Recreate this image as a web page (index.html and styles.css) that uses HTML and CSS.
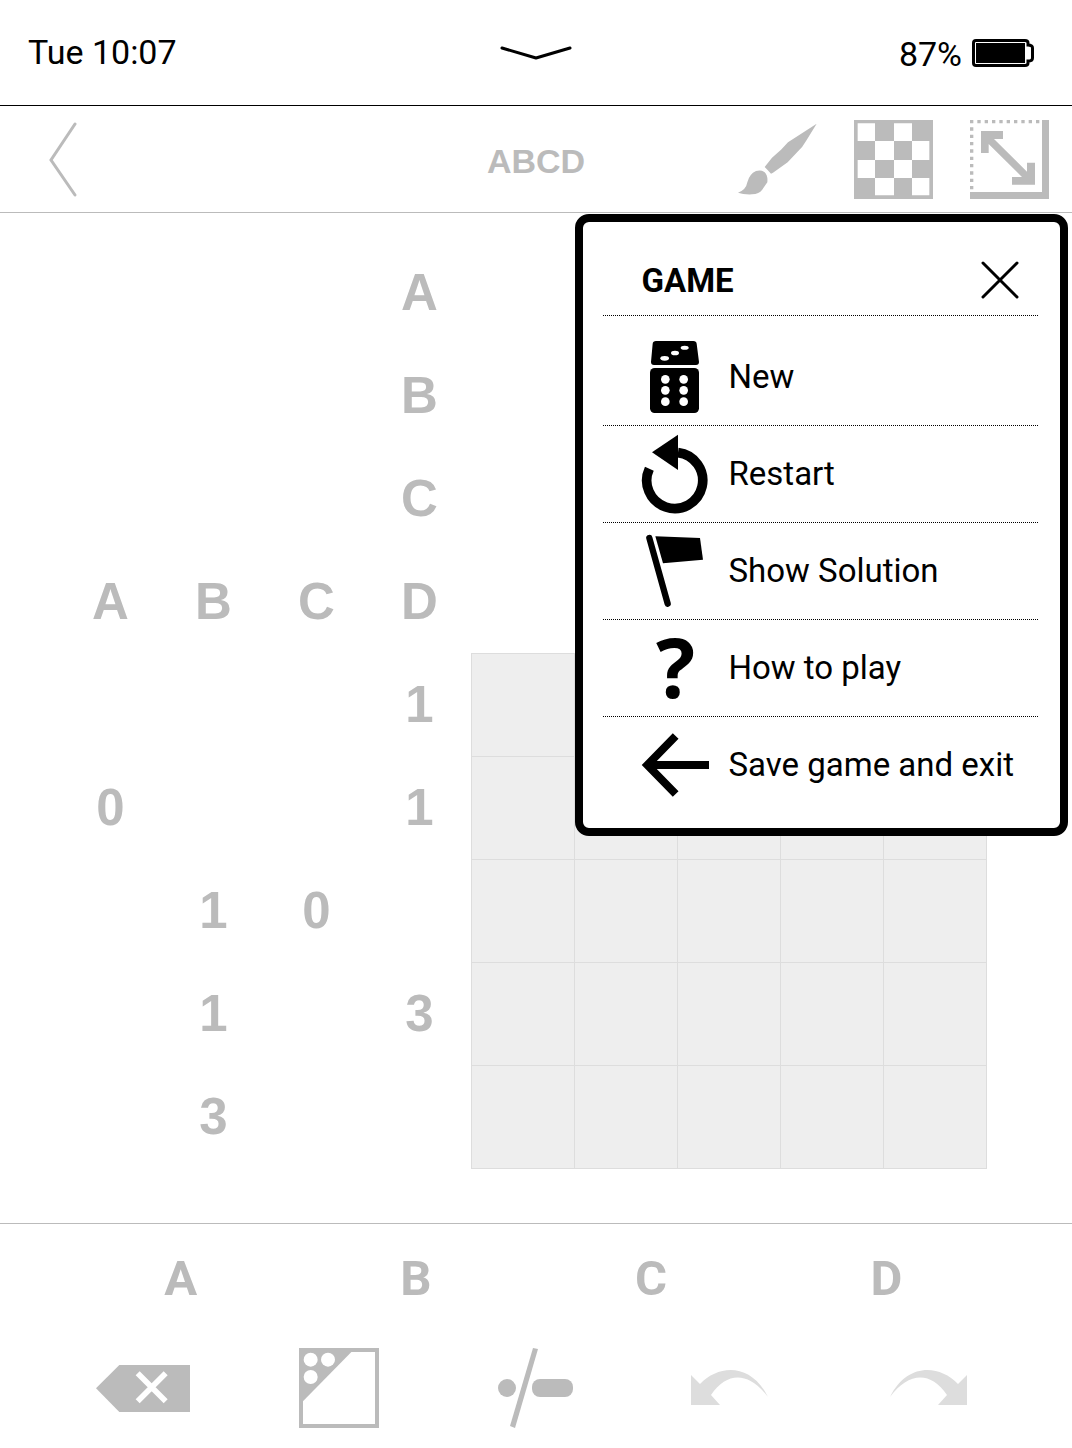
FILE: index.html
```html
<!DOCTYPE html>
<html lang="en">
<head>
<meta charset="utf-8">
<meta name="viewport" content="width=device-width, initial-scale=1">
<title>ABCD</title>
<link rel="stylesheet" href="styles.css">
</head>
<body>
<div class="app">
  <header class="status">
    <time class="clock">Tue 10:07</time>
    <button class="icon-button" aria-label="Open panel">
      <svg width="74" height="18" viewBox="0 0 74 18"><path d="M3 4 37 14 71 4" fill="none" stroke="#000" stroke-width="3" stroke-linecap="round" stroke-linejoin="round"/></svg>
    </button>
    <div class="power">
      <span>87%</span>
      <svg width="62" height="28" viewBox="0 0 62 28"><path d="M4 1.500H53Q56 1.500 56 4V6Q60.500 6 60.500 9V19Q60.500 22 56 22V24Q56 26.500 53 26.500H4Q1.500 26.500 1.500 24V4Q1.500 1.500 4 1.500Z" fill="none" stroke="#000" stroke-width="3"/><path d="M4 4H53V24H4Z"/></svg>
    </div>
  </header>

  <nav class="toolbar">
    <button class="icon-button back" aria-label="Back">
      <svg width="30" height="76" viewBox="0 0 30 76"><path d="M27 2 3 38 27 73" fill="none" stroke="currentColor" stroke-width="3" stroke-linecap="round"/></svg>
    </button>
    <h1 class="title">ABCD</h1>
    <div class="tools">
      <button class="icon-button" aria-label="Brush">
        <svg width="80" height="80" viewBox="0 0 240 240" fill="currentColor"><path d="M236 11 206 60Q194 82 178 96L149 127 105 158 99 161Q90 151 80 141L102 113 129 89 150 67ZM0 218Q24 210 28 187 34 162 54 153 70 148 80 157 90 166 88 187L72 210Q64 222 42 223 16 224 0 218Z"/></svg>
      </button>
      <button class="icon-button" aria-label="Pattern">
        <svg width="80" height="80" viewBox="0 0 240 240"><path d="M0 0H237V237H0Z" fill="currentColor"/><path d="M11 10H63V63H11ZM120 10H174V63H120ZM63 63H120V120H63ZM174 63H226V120H174ZM11 120H63V174H11ZM120 120H174V174H120ZM63 174H120V226H63ZM174 174H226V226H174Z" fill="#fff"/></svg>
      </button>
      <button class="icon-button" aria-label="Resize">
        <svg width="80" height="80" viewBox="0 0 240 240" fill="currentColor"><path d="M216 0H237V237H0V216H216ZM33 33H99V57H72L171 155V128H195V194H126V171H156L56 72V99H33Z"/><path d="M0 5H213M5 0V213" fill="none" stroke="currentColor" stroke-width="10" stroke-dasharray="10 12"/></svg>
      </button>
    </div>
  </nav>

  <main class="play">
    <div class="board">
      <div class="clues">
        <b class="clue c4 r1">A</b>
        <b class="clue c4 r2">B</b>
        <b class="clue c4 r3">C</b>
        <b class="clue c1 r4">A</b><b class="clue c2 r4">B</b><b class="clue c3 r4">C</b><b class="clue c4 r4">D</b>
        <b class="clue c4 r5">1</b>
        <b class="clue c1 r6">0</b><b class="clue c4 r6">1</b>
        <b class="clue c2 r7">1</b><b class="clue c3 r7">0</b>
        <b class="clue c2 r8">1</b><b class="clue c4 r8">3</b>
        <b class="clue c2 r9">3</b>
      </div>
      <div class="cells">
        <i></i><i></i><i></i><i></i><i></i>
        <i></i><i></i><i></i><i></i><i></i>
        <i></i><i></i><i></i><i></i><i></i>
        <i></i><i></i><i></i><i></i><i></i>
        <i></i><i></i><i></i><i></i><i></i>
      </div>
    </div>

    <section class="menu" role="dialog" aria-labelledby="menu-title">
      <div class="menu-head">
        <h2 id="menu-title">GAME</h2>
        <button class="icon-button" aria-label="Close">
          <svg width="38" height="38" viewBox="0 0 38 38"><path d="M2 2 36 36M36 2 2 36" stroke="#000" stroke-width="3" stroke-linecap="round"/></svg>
        </button>
      </div>
      <ul class="menu-list">
        <li><button class="item">
          <svg width="68" height="84" viewBox="213 375 204 252"><path d="M258 393H370Q379 393 380 401L387 456Q387 465 378 465H252Q243 465 243 456L248 401Q249 393 258 393Z"/><rect x="240" y="474" width="147" height="135" rx="14"/><g fill="#fff"><ellipse cx="284" cy="445" rx="13" ry="7"/><ellipse cx="315" cy="429" rx="12" ry="7"/><ellipse cx="344" cy="413" rx="12" ry="6"/><circle cx="286" cy="508" r="13"/><circle cx="341" cy="508" r="13"/><circle cx="286" cy="541" r="13"/><circle cx="341" cy="541" r="13"/><circle cx="286" cy="575" r="13"/><circle cx="341" cy="575" r="13"/></g></svg>
          New</button></li>
        <li><button class="item">
          <svg width="68" height="84" viewBox="153 36 204 252"><path d="M178 146A84 84 0 1 0 264 98" fill="none" stroke="#000" stroke-width="29"/><path d="M186 97 264 44V150Z"/></svg>
          Restart</button></li>
        <li><button class="item">
          <svg width="68" height="84" viewBox="153 327 204 252"><path d="M178 354 233 551" stroke="#000" stroke-width="19" stroke-linecap="round"/><path d="M196 349 330 354 339 419 219 430Z"/></svg>
          Show Solution</button></li>
        <li><button class="item">
          <span class="question" aria-hidden="true">?</span>
          How to play</button></li>
        <li><button class="item">
          <svg width="68" height="84" viewBox="153 369 204 252"><path d="M257 408 172 495 257 582M172 495H357" fill="none" stroke="#000" stroke-width="24"/></svg>
          Save game and exit</button></li>
      </ul>
    </section>
  </main>

  <footer class="pad">
    <div class="letters">
      <button>A</button><button>B</button><button>C</button><button>D</button>
    </div>
    <div class="actions">
      <button class="icon-button" aria-label="Erase">
        <svg width="94" height="47" viewBox="108 465 282 141"><path d="M108 535 178 465H390V606H178Z" fill="currentColor"/><path d="M233 490 317 574M317 490 233 574" stroke="#fff" stroke-width="17"/></svg>
      </button>
      <button class="icon-button" aria-label="Pencil marks">
        <svg width="80" height="80" viewBox="717 414 240 240"><path d="M723 420H951V648H723Z" fill="none" stroke="currentColor" stroke-width="12"/><path d="M723 420H880L723 580Z" fill="currentColor"/><g fill="#fff"><circle cx="752" cy="449" r="21"/><circle cx="804" cy="449" r="21"/><circle cx="752" cy="501" r="21"/></g></svg>
      </button>
      <button class="icon-button" aria-label="Dot or dash">
        <svg width="76" height="80" viewBox="0 0 76 80" fill="currentColor"><rect x="1" y="31" width="18" height="18" rx="9"/><rect x="35" y="31" width="41" height="18" rx="8"/><path d="M36 0 41 1 18 80 13 78Z"/></svg>
      </button>
      <button class="icon-button faint" aria-label="Undo">
        <svg width="80" height="80" viewBox="0 0 80 80" fill="currentColor"><path d="M0 27 9 36C29 15 61 16 77 49 59 25 37 22 20 47L29 57H0Z"/></svg>
      </button>
      <button class="icon-button faint" aria-label="Redo">
        <svg width="80" height="80" viewBox="0 0 80 80" fill="currentColor"><path d="M80 27 71 36C51 15 19 16 3 49 21 25 43 22 60 47L51 57H80Z"/></svg>
      </button>
    </div>
  </footer>
</div>
</body>
</html>
```
FILE: styles.css
```css
* {
  box-sizing: border-box;
}

body {
  margin: 0;
  background: #fff;
  color: #000;
  font: 34px/40px Roboto, sans-serif;
}

h1, h2, ul {
  margin: 0;
  padding: 0;
}

button {
  padding: 0;
  border: 0;
  background: none;
  color: inherit;
  font: inherit;
}

svg {
  display: block;
  flex: none;
}

.icon-button {
  display: flex;
  align-items: center;
  justify-content: center;
}

.status,
.toolbar {
  display: grid;
  grid-template-columns: 1fr auto 1fr;
  align-items: center;
}

.status {
  height: 106px;
  padding: 0 38px 0 28px;
  border-bottom: 1px solid #000;
}

.clock {
  padding-bottom: 2px;
}

.status .icon-button {
  margin-left: 10px;
}

.power {
  display: flex;
  align-items: center;
  justify-content: flex-end;
  gap: 10px;
}

.power span {
  padding-top: 2px;
}

.toolbar {
  height: 107px;
  padding: 2px 22px 0;
  border-bottom: 1px solid #bbb;
  color: #bbb;
}

.back {
  justify-self: start;
  margin-left: 26px;
}

.title {
  padding-top: 2px;
  font: bold 34px/40px "Liberation Sans", sans-serif;
}

.tools {
  display: flex;
  justify-content: flex-end;
  gap: 36px;
}

.play {
  position: relative;
  display: flex;
  justify-content: center;
  padding: 28px 26px 54px 0;
}

.board {
  display: grid;
  grid-template-columns: 412px 516px;
  align-items: start;
}

.clues {
  display: grid;
  grid-template-columns: repeat(4, 103px);
  grid-template-rows: repeat(9, 103px);
  color: #bbb;
}

.clue {
  font: bold 51px/103px "Liberation Sans", sans-serif;
  text-align: center;
}

.c1 { grid-column: 1; }
.c2 { grid-column: 2; }
.c3 { grid-column: 3; }
.c4 { grid-column: 4; }
.r1 { grid-row: 1; }
.r2 { grid-row: 2; }
.r3 { grid-row: 3; }
.r4 { grid-row: 4; }
.r5 { grid-row: 5; }
.r6 { grid-row: 6; }
.r7 { grid-row: 7; }
.r8 { grid-row: 8; }
.r9 { grid-row: 9; }

.cells {
  display: grid;
  grid-template-columns: repeat(5, 102px);
  grid-auto-rows: 102px;
  gap: 1px;
  margin-top: 412px;
  padding: 1px;
  background: #ddd;
}

.cells i {
  background: #eee;
}

.menu {
  position: absolute;
  top: 1px;
  right: 4px;
  padding: 0 22px 15px 20px;
  border: 8px solid #000;
  border-radius: 14px;
  background: #fff;
  font-size: 33px;
}

.menu-head {
  display: flex;
  align-items: center;
  justify-content: space-between;
  height: 94px;
  margin-bottom: 13px;
  padding: 22px 19px 0 38px;
  border-bottom: 1px dotted #000;
}

.menu-head h2 {
  padding-top: 2px;
  font-size: 33px;
  font-weight: 700;
}

.menu-list {
  list-style: none;
}

.menu-list li + li {
  border-top: 1px dotted #000;
}

.item {
  display: flex;
  align-items: center;
  gap: 19px;
  width: 100%;
  height: 96px;
  padding: 0 24px 0 38px;
  white-space: nowrap;
}

.question {
  width: 68px;
  padding-bottom: 4px;
  font: bold 82px/84px "Open Sans", sans-serif;
  text-align: center;
}

.pad {
  padding-bottom: 6px;
  border-top: 1px solid #bbb;
  color: #bbb;
}

.letters {
  display: grid;
  grid-template-columns: repeat(4, 1fr);
  padding: 0 68px 0 63px;
}

.letters button {
  height: 110px;
  font-size: 49px;
  font-weight: 700;
}

.actions {
  display: grid;
  grid-template-columns: repeat(5, 1fr);
  height: 108px;
  padding: 0 47px 0 45px;
}

.faint {
  color: #ddd;
}
```
